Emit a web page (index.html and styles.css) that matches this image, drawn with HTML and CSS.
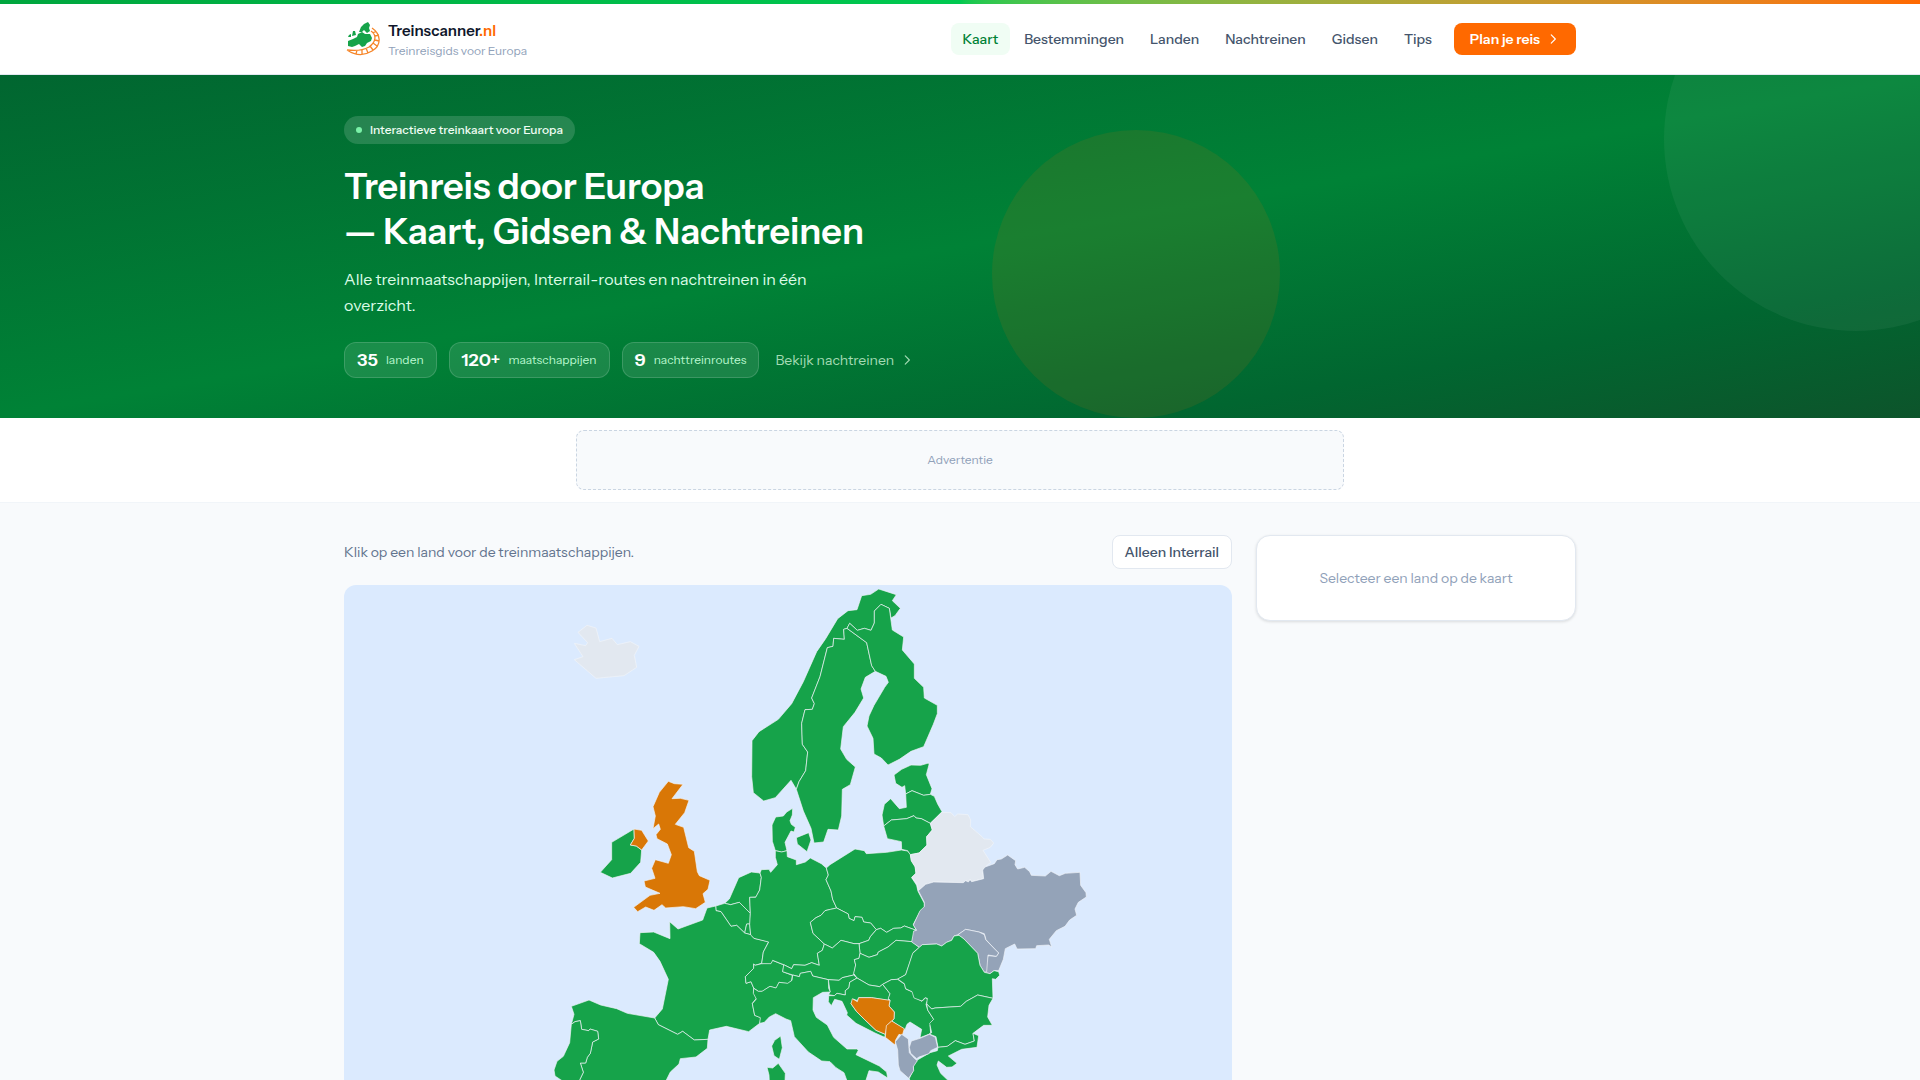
FILE: index.html
```html
<!DOCTYPE html>
<html lang="nl">
<head>
    <meta charset="UTF-8">
    <meta name="viewport" content="width=device-width, initial-scale=1.0">
    <title>Treinscanner.nl - Treinreisgids voor Europa</title>
    <link rel="stylesheet" href="styles.css">
</head>
<body>
    <div class="top-line"></div>

    <header class="header">
        <div class="container header-inner">
            <a href="#" class="logo">
                <svg class="logo-img" viewBox="0 0 36 36" aria-hidden="true">
                    <path class="logo-land" d="M4 20 9 18 13 16 14 13 18 11 21 13 26 13 28 17 27 20 23 22 21 25 18 26 15 23 11 25 8 26 4 25ZM15 11 17 6 20 3 24 1 26 4 25 7 26 10 23 12 20 9 18 11ZM9 10 11 10 12 14 8 15ZM5 14 7 13 7 16 4 16Z"/>
                    <path class="logo-rail" d="M28 7C37 13 38 24 28 30 20 35 12 35 3 29M27 10C33 14 32 21 25 26 18 30 11 30 3 29M29 12 32 10M31 15 35 14M31 19 35 20M29 22 33 25M26 25 29 29M22 27 24 32M18 29 18 34M13 29 12 33"/>
                </svg>
                <span class="logo-text">
                    <strong>Treinscanner<em>.nl</em></strong>
                    <small>Treinreisgids voor Europa</small>
                </span>
            </a>
            <nav class="nav">
                <a href="#" class="active">Kaart</a>
                <a href="#">Bestemmingen</a>
                <a href="#">Landen</a>
                <a href="#">Nachtreinen</a>
                <a href="#">Gidsen</a>
                <a href="#">Tips</a>
                <a href="#" class="cta">Plan je reis
                    <svg class="chevron" viewBox="0 0 24 24" aria-hidden="true"><path d="m9 5 7 7-7 7"/></svg>
                </a>
            </nav>
        </div>
    </header>

    <section class="hero">
        <div class="circle circle-right"></div>
        <div class="circle circle-mid"></div>
        <div class="container hero-inner">
            <span class="badge"><i class="dot"></i>Interactieve treinkaart voor Europa</span>
            <h1>Treinreis door Europa<br>— Kaart, Gidsen &amp; Nachtreinen</h1>
            <p class="intro">Alle treinmaatschappijen, Interrail-routes en nachtreinen in één overzicht.</p>
            <div class="stats">
                <div class="stat"><b>35</b><span>landen</span></div>
                <div class="stat"><b>120+</b><span>maatschappijen</span></div>
                <div class="stat"><b>9</b><span>nachttreinroutes</span></div>
                <a href="#" class="night-link">Bekijk nachtreinen
                    <svg class="chevron" viewBox="0 0 24 24" aria-hidden="true"><path d="m9 5 7 7-7 7"/></svg>
                </a>
            </div>
        </div>
    </section>

    <div class="ad-bar">
        <div class="ad">Advertentie</div>
    </div>

    <main class="container content">
        <section class="map-col">
            <div class="toolbar">
                <p>Klik op een land voor de treinmaatschappijen.</p>
                <button type="button" class="filter-btn">Alleen Interrail</button>
            </div>
            <svg class="map" viewBox="-588 15 2664 1776" role="img" aria-label="Kaart van Europa">
                <!-- Noord-Europa -->
                <g transform="translate(60 0)">
                    <polygon class="none" points="81,136 108,144 119,185 156,175 172,194 211,185 237,199 223,226 230,262 192,287 108,295 43,239 69,230 43,190 77,197 83,188 54,157"/>
                </g>
                <g transform="translate(600 0)">
                    <polygon points="416,27 469,44 457,62 481,85 465,107 453,114 448,85 423,73 403,93 403,129 393,151 373,145 352,151 329,130 321,145 311,148 313,178 281,175 279,199 262,203 240,290 215,354 223,371 217,388 195,389 185,430 187,493 203,516 197,572 177,605 169,628 153,601 106,653 71,663 40,638 35,590 36,482 57,455 115,418 155,371 190,305 230,215 257,176 293,116 324,92 351,89 365,47 392,43"/>
                    <polygon points="321,145 380,188 395,257 406,274 376,292 363,327 371,354 345,397 310,440 302,507 320,538 346,561 331,614 307,628 305,708 295,750 264,748 251,786 222,789 213,745 190,693 169,628 177,605 197,572 203,516 187,493 185,430 195,389 217,388 223,371 215,354 240,290 262,203 279,199 281,175 313,178 311,148"/>
                    <polygon points="329,130 352,151 373,145 393,151 403,129 403,93 423,73 448,85 457,150 491,171 487,210 523,252 523,295 551,322 553,354 592,376 592,401 580,433 551,500 513,514 478,538 444,555 424,534 402,522 399,475 381,438 387,408 402,376 434,322 445,307 438,289 406,274 395,257 380,188 321,145"/>
                </g>
                <!-- West-Europa -->
                <g transform="translate(120 540)">
                    <polygon points="638,145 637,165 630,182 634,193 646,202 642,216 633,213 615,247 621,272 605,276 586,272 577,244 576,195 587,171 610,168 620,156"/>
                    <polygon points="649,233 686,218 693,240 681,275 652,252"/>
                    <polygon class="partial" points="265,64 283,71 309,73 276,116 301,115 327,121 314,158 286,193 311,202 326,263 343,274 352,335 358,347 390,361 384,388 369,401 376,427 347,446 310,440 257,444 246,434 222,451 197,441 173,455 161,442 210,406 240,400 196,381 192,363 225,355 215,325 226,299 265,310 274,284 262,252 231,236 228,224 241,208 236,192 219,206 226,168 219,140 238,97"/>
                    <polygon points="162,207 163,235 151,255 169,258 185,270 182,307 152,340 97,354 61,337 95,299 95,247"/>
                    <polygon class="partial" points="162,207 185,211 205,243 185,270 169,258 151,255 163,235"/>
                    <polygon points="434,430 448,417 476,353 514,336 540,339 544,352 539,390 528,411 509,412 511,460 478,427 452,434"/>
                    <polygon points="407,438 434,430 452,434 478,427 511,460 510,492 500,492 494,519 470,496 453,499 423,455 408,452"/>
                    <polygon points="500,492 509,492 512,524 494,519"/>
                    <polygon points="407,438 408,452 423,455 453,499 470,496 494,519 512,524 522,535 566,545 550,576 545,610 525,616 521,612 521,625 496,650 498,670 513,665 521,684 521,698 530,714 517,730 524,766 543,773 539,790 506,815 439,799 389,810 384,838 343,840 308,814 293,823 235,794 224,774 247,747 265,658 240,604 221,577 178,551 180,518 221,516 270,536 269,485 294,507 368,480 381,444"/>
                    <polygon points="521,612 525,616 545,611 573,609 577,601 612,615 608,635 637,646 635,661 624,671 597,667 589,685 570,679 547,694 535,694 521,684 513,665 498,670 496,650 521,625"/>
                </g>
                <!-- Spanje en Portugal -->
                <g transform="translate(0 1140)">
                    <polygon points="94,139 147,120 182,135 230,146 262,160 344,174 355,194 413,223 428,214 463,240 504,238 502,265 468,291 421,296 417,312 391,336 378,362 360,400 372,430 340,480 300,520 220,530 170,560 130,520 100,510 120,430 118,362 130,337 121,309 137,309 142,292 151,280 158,246 176,237 173,214 150,207 146,212 125,208 121,182 105,185 94,193 102,163"/>
                    <polygon points="94,193 105,185 121,182 125,208 146,212 150,207 173,214 176,237 158,246 151,280 142,292 137,309 121,309 130,337 118,362 120,430 100,510 50,505 58,430 66,362 45,348 42,330 51,304 70,289 89,248 91,225"/>
                </g>
                <!-- Midden-Europa, Italie en de Balkan -->
                <g transform="translate(600 720)">
                    <polygon points="106,92 125,96 141,92 142,110 169,120 169,134 196,126 211,114 244,131 259,144 265,165 258,179 273,213 278,238 290,264 272,268 255,272 243,286 228,293 211,307 219,340 253,372 247,391 232,400 238,436 215,428 195,436 161,434 155,446 131,434 98,421 93,431 65,431 70,396 86,366 42,355 32,345 29,313 31,280 29,232 47,232 59,210 64,172 60,159 64,149 87,148 92,157 112,134 106,112"/>
                    <polygon points="259,144 270,134 345,87 373,92 379,101 440,97 484,90 503,93 511,103 514,121 526,141 528,160 515,173 530,196 534,214 553,250 553,263 540,275 520,313 529,331 493,318 482,324 461,325 440,337 422,325 409,329 392,309 371,306 366,292 345,290 342,302 327,295 325,282 290,264 278,238 273,213 258,179 265,165"/>
                    <polygon points="290,264 325,282 327,295 342,302 345,290 366,292 371,306 392,309 409,329 391,350 386,361 357,371 342,371 303,361 277,384 253,372 219,340 211,307 228,293 243,286 255,272 272,268"/>
                    <polygon points="409,329 422,325 440,337 461,325 482,324 493,318 526,330 516,365 468,361 444,381 415,396 412,404 387,412 360,400 357,371 386,361 391,350"/>
                    <polygon points="253,372 277,384 303,361 342,371 357,371 360,400 357,415 343,419 347,435 341,465 307,473 297,481 265,479 218,468 212,454 181,460 178,470 158,465 128,455 131,434 155,446 161,434 195,436 215,428 238,436 232,400 247,391"/>
                    <polygon points="360,400 387,412 412,404 415,396 444,381 468,361 516,365 538,382 520,397 497,464 473,478 454,479 428,493 419,500 387,495 351,474 341,460 347,435 343,419 357,415"/>
                    <polygon points="265,479 297,481 307,473 341,465 351,474 329,487 327,503 316,512 316,525 291,520 283,527 266,524 270,514"/>
                    <polygon points="351,474 387,495 419,500 428,493 450,521 445,541 395,533 356,533 352,542 340,537 333,551 350,575 373,598 408,631 436,643 434,652 405,639 348,610 320,585 322,578 306,544 284,538 274,557 265,545 266,527 283,527 291,520 316,525 316,512 327,503 329,487"/>
                    <polygon points="428,493 454,479 473,478 494,493 497,507 520,517 524,532 546,544 558,532 563,540 558,553 563,570 581,598 570,617 572,640 566,643 540,653 545,628 510,606 501,613 495,629 455,603 462,597 463,576 447,558 450,541 445,535 450,521"/>
                    <polygon class="partial" points="337,536 352,545 356,533 395,533 450,541 447,558 463,576 462,597 455,603 441,617 436,643 408,631 373,598 350,575 333,551"/>
                    <polygon points="158,465 178,470 181,460 212,454 218,468 265,479 266,505 271,516 248,517 220,533 219,570 229,592 262,615 281,652 321,687 350,687 355,691 348,704 418,738 440,756 443,774 415,756 387,752 375,790 350,850 335,800 320,780 312,758 288,743 270,725 245,723 205,696 163,650 152,602 138,597 107,581 88,591 73,607 59,610 61,593 44,586 37,551 49,537 40,520 41,505 55,514 66,514 90,499 108,504 117,487 143,490 156,481"/>
                    <polygon points="122,648 127,683 118,718 102,707 95,678 104,661"/>
                    <polygon points="81,742 98,744 115,730 136,760 133,830 105,850 90,830 87,765"/>
                </g>
                <!-- Oost-Europa -->
                <g transform="translate(960 480)">
                    <polygon points="137,162 134,137 126,142 107,130 102,105 125,88 153,75 182,76 206,69 207,74 199,104 216,146 211,163 191,166 156,152"/>
                    <polygon points="71,258 66,225 73,193 92,176 118,206 139,202 137,162 156,152 191,166 211,163 223,169 233,192 246,215 211,250 184,236 168,234 162,227 140,236 94,240"/>
                    <polygon points="71,258 94,240 140,236 162,227 168,234 184,236 211,250 217,270 200,290 201,316 177,339 151,344 143,332 125,328 124,305 82,296"/>
                    <polygon class="none" points="246,217 273,218 284,230 293,222 324,224 332,240 331,260 366,290 372,297 391,298 401,309 391,322 369,331 392,367 375,381 368,390 371,416 335,425 330,419 325,426 317,422 310,428 221,426 197,433 175,452 170,430 155,412 168,400 165,380 154,363 151,344 177,339 201,316 200,290 217,270 211,250"/>
                    <polygon class="limited" points="175,452 197,433 221,426 310,428 317,422 325,426 330,419 335,425 371,416 368,390 375,381 403,371 411,359 424,357 443,345 467,362 465,374 473,387 494,382 509,395 514,406 556,408 573,394 598,407 616,400 660,397 662,436 678,458 679,471 655,487 645,507 650,526 629,540 615,559 589,572 568,598 575,621 566,615 530,617 527,626 471,627 464,612 436,626 430,658 416,692 402,692 390,701 373,697 384,647 409,649 416,639 404,627 378,599 373,581 357,576 317,568 294,584 282,588 275,601 260,607 245,618 230,612 187,614 178,622 155,606 161,573 170,571 160,555 180,512 193,500 193,487"/>
                    <polygon class="limited" points="294,584 317,568 357,576 373,584 377,599 404,627 416,639 409,649 384,645 380,695 373,697 360,676 353,640 312,597"/>
                    <polygon points="178,622 187,614 230,612 245,618 260,607 275,601 282,588 297,586 312,597 353,640 360,676 373,697 390,701 402,692 416,695 419,706 407,718 397,716 399,775 353,765 319,784 302,799 225,804 215,807 200,792 202,775 195,773 186,783 162,774 156,755 137,746 133,731 113,717 137,704 158,640"/>
                    <polygon points="399,775 387,796 383,831 397,856 371,856 339,880 343,903 315,913 286,902 262,919 234,922 228,890 208,882 215,878 209,850 221,838 203,810 200,792 215,807 225,804 302,799 319,784 353,765"/>
                    <polygon points="234,922 262,919 286,902 315,913 343,903 339,880 356,887 351,922 305,928 265,948 291,970 276,981 260,982 235,963 231,975 242,1000 263,1020 290,1060 270,1110 230,1180 190,1150 160,1080 148,1015 160,990 160,975 172,960 210,938 232,932"/>
                    <polygon class="partial" points="95,843 133,866 127,886 117,883 107,900 105,915 76,892 79,857"/>
                    <polygon class="limited" points="125,883 145,897 148,938 163,955 172,962 160,980 161,992 146,1015 120,992 115,975 113,930 106,905"/>
                    <polygon class="limited" points="148,922 154,903 180,895 208,883 226,892 233,922 212,932 207,941 177,951 170,956 152,940"/>
                </g>
            </svg>
        </section>
        <aside class="panel">Selecteer een land op de kaart</aside>
    </main>
</body>
</html>
```
FILE: styles.css
```css
* {
    margin: 0;
    padding: 0;
    box-sizing: border-box;
}

body {
    font-family: "Instrument Sans", Inter, sans-serif;
    background: #f8fafc;
    color: #0f172b;
    line-height: 24px;
}

a {
    text-decoration: none;
}

.container {
    max-width: 1280px;
    margin: 0 auto;
    padding: 0 24px;
}

.top-line {
    height: 4px;
    background: linear-gradient(in oklab 90deg, #00a63e, #00c950 50%, #ff6900);
}

/* header */
.header {
    background: white;
    border-bottom: 1px solid #e2e8f0;
}

.header-inner {
    display: flex;
    justify-content: space-between;
    align-items: center;
    height: 70px;
}

.logo {
    display: flex;
    align-items: center;
    gap: 8px;
}

.logo-img {
    width: 36px;
    height: 36px;
}

.logo-land {
    fill: #16a34a;
}

.logo-rail {
    fill: none;
    stroke: #f6862a;
    stroke-width: 1.3;
}

.logo-text {
    display: flex;
    flex-direction: column;
    padding-top: 4px;
}

.logo-text strong {
    font-size: 15px;
    line-height: 20px;
    font-weight: 600;
    color: #0f172b;
}

.logo-text em {
    font-style: normal;
    color: #ff6900;
}

.logo-text small {
    font-size: 12px;
    line-height: 20px;
    color: #90a1b9;
}

.nav {
    display: flex;
    align-items: center;
    gap: 2px;
}

.nav a {
    padding: 6px 12px;
    border-radius: 8px;
    font-size: 14px;
    line-height: 20px;
    font-weight: 500;
    color: #45556c;
}

.nav .active {
    background: #f0fdf4;
    color: #008236;
}

.nav .cta {
    display: flex;
    align-items: center;
    gap: 6px;
    margin-left: 8px;
    padding: 6px 16px;
    background: #ff6900;
    color: white;
    font-weight: 600;
}

.chevron {
    width: 14px;
    height: 14px;
    fill: none;
    stroke: currentColor;
    stroke-width: 2;
    stroke-linecap: round;
    stroke-linejoin: round;
}

/* hero */
.hero {
    position: relative;
    overflow: hidden;
    background: linear-gradient(170deg, #016630, #008236 50%, #016630 80%, #0d542b);
}

.circle {
    position: absolute;
    border-radius: 50%;
}

.circle-right {
    width: 384px;
    height: 384px;
    top: -128px;
    right: -128px;
    background: rgba(255, 255, 255, 0.05);
}

.circle-mid {
    width: 288px;
    height: 288px;
    bottom: 0;
    right: 640px;
    background: rgba(255, 105, 0, 0.1);
}

.hero-inner {
    position: relative;
    padding-top: 41px;
    padding-bottom: 40px;
}

.badge {
    display: flex;
    align-items: center;
    gap: 8px;
    width: fit-content;
    padding: 4px 12px;
    border-radius: 14px;
    background: rgba(255, 255, 255, 0.15);
    color: #f0fdf4;
    font-size: 12px;
    line-height: 20px;
    font-weight: 500;
}

.dot {
    width: 6px;
    height: 6px;
    border-radius: 50%;
    background: #7bf1a8;
}

.hero h1 {
    margin: 20px 0 12px;
    font-size: 36px;
    line-height: 45px;
    font-weight: 600;
    color: white;
}

.intro {
    max-width: 512px;
    margin-bottom: 24px;
    font-size: 16px;
    line-height: 26px;
    color: #dcfce7;
}

.stats {
    display: flex;
    align-items: center;
    gap: 12px;
}

.stat {
    display: flex;
    align-items: center;
    gap: 8px;
    padding: 3px 12px;
    border: 1px solid rgba(255, 255, 255, 0.15);
    border-radius: 12px;
    background: rgba(255, 255, 255, 0.1);
}

.stat b {
    font-size: 18px;
    line-height: 28px;
    font-weight: 600;
    color: white;
}

.stat span {
    font-size: 12px;
    color: #b9f8cf;
}

.night-link {
    display: flex;
    align-items: center;
    gap: 6px;
    margin-left: 4px;
    font-size: 14px;
    color: #a4dbb4;
}

/* advertentie */
.ad-bar {
    padding: 12px 24px;
    background: white;
    border-bottom: 1px solid #f1f5f9;
}

.ad {
    display: flex;
    justify-content: center;
    align-items: center;
    max-width: 768px;
    height: 60px;
    margin: 0 auto;
    border: 1px dashed #cad5e2;
    border-radius: 8px;
    background: #f8fafc;
    font-size: 12px;
    color: #90a1b9;
}

/* kaart */
.content {
    display: grid;
    grid-template-columns: 1fr 320px;
    gap: 24px;
    align-items: start;
    padding-top: 32px;
    padding-bottom: 32px;
}

.toolbar {
    display: flex;
    justify-content: space-between;
    align-items: center;
    margin-bottom: 16px;
    font-size: 14px;
    color: #62748e;
}

.filter-btn {
    padding: 6px 12px;
    border: 1px solid #e2e8f0;
    border-radius: 8px;
    background: white;
    font: inherit;
    font-weight: 500;
    line-height: 20px;
    color: #45556c;
    cursor: pointer;
}

.map {
    display: block;
    width: 100%;
    height: auto;
    border-radius: 12px;
    background: #dbeafe;
}

.map polygon {
    fill: #16a34a;
    stroke: #f1f5f9;
    stroke-width: 2;
    stroke-linejoin: round;
}

.map .partial {
    fill: #d97706;
}

.map .limited {
    fill: #94a3b8;
}

.map .none {
    fill: #e2e8f0;
}

.panel {
    padding: 30px 24px;
    border: 1px solid #e2e8f0;
    border-radius: 14px;
    background: white;
    box-shadow: 0 1px 3px rgba(0, 0, 0, 0.12);
    text-align: center;
    font-size: 14px;
    color: #90a1b9;
}
```
